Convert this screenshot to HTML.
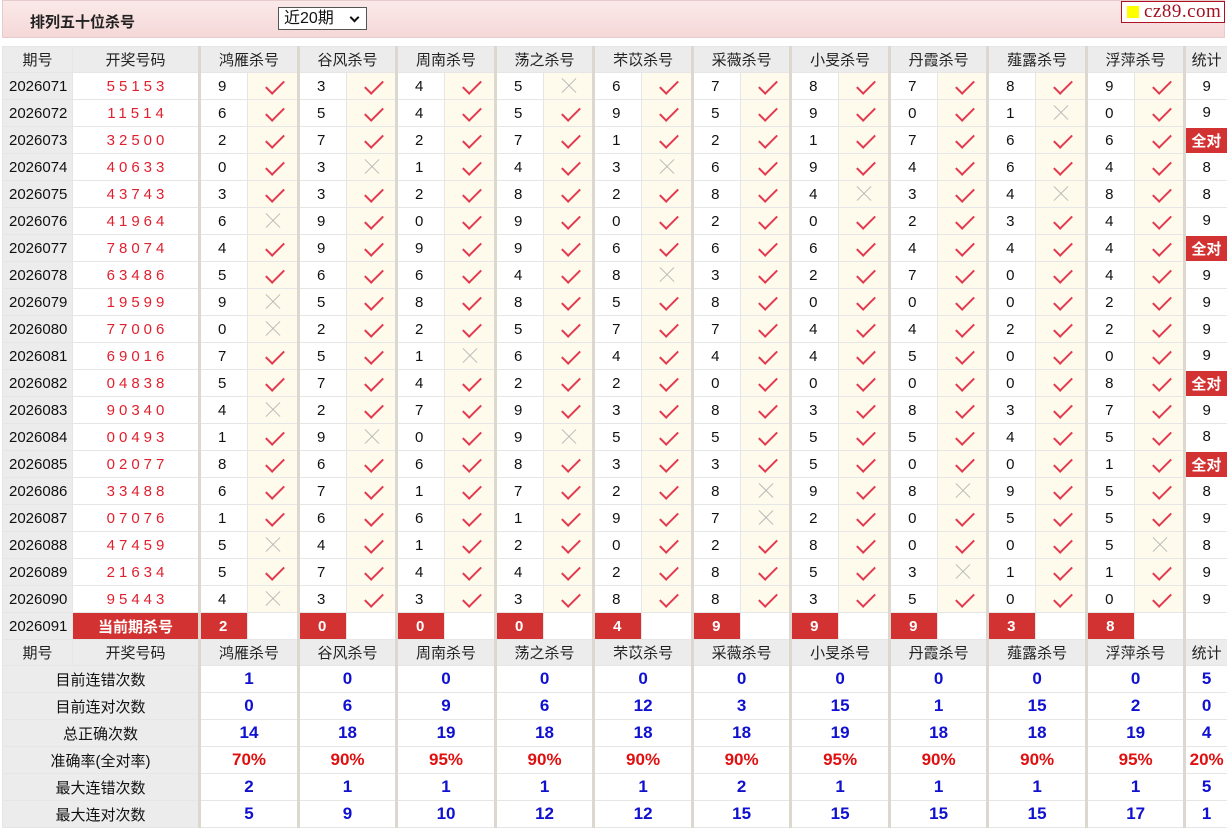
<!DOCTYPE html>
<html><head><meta charset="utf-8">
<style>
*{margin:0;padding:0;box-sizing:border-box}
body{width:1227px;height:828px;overflow:hidden;background:#fff;font-family:"Liberation Sans","Noto Sans CJK SC",sans-serif;font-size:15px;color:#111}
.top{position:absolute;left:2px;top:0;width:1223px;height:38px;background:linear-gradient(#fbe9e9,#f5d8d8);border:1px solid #e6cccc}
.title{position:absolute;left:27px;top:10px;font-size:15px;font-weight:bold;color:#222}
.sel{position:absolute;left:278px;top:7px;width:89px;height:23px;border:1px solid #555;background:#fff;font-size:16px;padding-left:5px;line-height:21px}
.sel i{position:absolute;right:8px;top:6px;width:7px;height:7px;border-right:2px solid #111;border-bottom:2px solid #111;transform:rotate(45deg)}
.logo{position:absolute;left:1121px;top:1px;width:104px;height:22px;border:1px solid #b01020;background:#fff;font-family:"Liberation Serif",serif;font-size:19px;color:#a01020;line-height:19px;padding-left:22px;letter-spacing:0.5px}
.logo b{position:absolute;left:5px;top:4px;width:12px;height:12px;background:#ff0}
table{position:absolute;left:2px;top:46px;border-collapse:collapse;table-layout:fixed;width:1225px}
td{height:27px;border:1px solid #e6e6e6;text-align:center;padding:0;white-space:nowrap;position:relative}
tr.h td{height:26px;background:#ececec;color:#222}
td.q{background:#ececec;text-align:left;padding-left:6px;font-size:15px}
tr.h td.q{text-align:center;padding:0}
td.m{color:#e0202f;letter-spacing:4px;padding-left:4px}
td.g{border-left:3px solid #dcd8d0;text-align:left;padding-left:17px}
tr.h td.g,td.g.s{text-align:center;padding-left:0}
td.y,td.n{background:#fffbec}
td.y::after{content:"";position:absolute;left:22px;top:3px;width:8px;height:16px;border-right:2px solid #e23a50;border-bottom:2px solid #e23a50;transform:rotate(45deg)}
td.n::before,td.n::after{content:"";position:absolute;left:15px;top:12px;width:20px;height:1px;background:#b8b8b8;transform:rotate(45deg)}
td.n::after{transform:rotate(-45deg)}
td.t{border-left:3px solid #dcd8d0}
td.a{background:#d33232;color:#fff;font-weight:bold;border:2px solid #fff;border-left:3px solid #dcd8d0}
td.r{background:#d33232;color:#fff;font-weight:bold;text-align:left;padding-left:18px}
td.cur{background:#d33232;color:#fff;font-weight:bold}
td.lb{background:#ececec;text-align:center}
td.v{color:#1010d0;font-weight:bold;font-size:17px;border-left:3px solid #dcd8d0;text-align:center}
td.p{color:#e01010}
</style></head><body>
<div class="top"><div class="title">排列五十位杀号</div></div>
<div class="sel">近20期<i></i></div>
<div class="logo"><b></b>cz89.com</div>
<table>
<colgroup><col style="width:70px"><col style="width:127px">
<col style="width:48px"><col style="width:51px"><col style="width:48px"><col style="width:50px"><col style="width:48px"><col style="width:51px"><col style="width:48px"><col style="width:50px"><col style="width:48px"><col style="width:51px"><col style="width:48px"><col style="width:50px"><col style="width:48px"><col style="width:51px"><col style="width:48px"><col style="width:50px"><col style="width:48px"><col style="width:51px"><col style="width:48px"><col style="width:50px"><col style="width:43px"></colgroup>
<tr class="h"><td class="q">期号</td><td>开奖号码</td><td class="g" colspan="2">鸿雁杀号</td><td class="g" colspan="2">谷风杀号</td><td class="g" colspan="2">周南杀号</td><td class="g" colspan="2">荡之杀号</td><td class="g" colspan="2">芣苡杀号</td><td class="g" colspan="2">采薇杀号</td><td class="g" colspan="2">小旻杀号</td><td class="g" colspan="2">丹霞杀号</td><td class="g" colspan="2">薤露杀号</td><td class="g" colspan="2">浮萍杀号</td><td class="t">统计</td></tr>
<tr><td class="q">2026071</td><td class="m">55153</td><td class="g">9</td><td class="y"></td><td class="g">3</td><td class="y"></td><td class="g">4</td><td class="y"></td><td class="g">5</td><td class="n"></td><td class="g">6</td><td class="y"></td><td class="g">7</td><td class="y"></td><td class="g">8</td><td class="y"></td><td class="g">7</td><td class="y"></td><td class="g">8</td><td class="y"></td><td class="g">9</td><td class="y"></td><td class="t">9</td></tr>
<tr><td class="q">2026072</td><td class="m">11514</td><td class="g">6</td><td class="y"></td><td class="g">5</td><td class="y"></td><td class="g">4</td><td class="y"></td><td class="g">5</td><td class="y"></td><td class="g">9</td><td class="y"></td><td class="g">5</td><td class="y"></td><td class="g">9</td><td class="y"></td><td class="g">0</td><td class="y"></td><td class="g">1</td><td class="n"></td><td class="g">0</td><td class="y"></td><td class="t">9</td></tr>
<tr><td class="q">2026073</td><td class="m">32500</td><td class="g">2</td><td class="y"></td><td class="g">7</td><td class="y"></td><td class="g">2</td><td class="y"></td><td class="g">7</td><td class="y"></td><td class="g">1</td><td class="y"></td><td class="g">2</td><td class="y"></td><td class="g">1</td><td class="y"></td><td class="g">7</td><td class="y"></td><td class="g">6</td><td class="y"></td><td class="g">6</td><td class="y"></td><td class="a">全对</td></tr>
<tr><td class="q">2026074</td><td class="m">40633</td><td class="g">0</td><td class="y"></td><td class="g">3</td><td class="n"></td><td class="g">1</td><td class="y"></td><td class="g">4</td><td class="y"></td><td class="g">3</td><td class="n"></td><td class="g">6</td><td class="y"></td><td class="g">9</td><td class="y"></td><td class="g">4</td><td class="y"></td><td class="g">6</td><td class="y"></td><td class="g">4</td><td class="y"></td><td class="t">8</td></tr>
<tr><td class="q">2026075</td><td class="m">43743</td><td class="g">3</td><td class="y"></td><td class="g">3</td><td class="y"></td><td class="g">2</td><td class="y"></td><td class="g">8</td><td class="y"></td><td class="g">2</td><td class="y"></td><td class="g">8</td><td class="y"></td><td class="g">4</td><td class="n"></td><td class="g">3</td><td class="y"></td><td class="g">4</td><td class="n"></td><td class="g">8</td><td class="y"></td><td class="t">8</td></tr>
<tr><td class="q">2026076</td><td class="m">41964</td><td class="g">6</td><td class="n"></td><td class="g">9</td><td class="y"></td><td class="g">0</td><td class="y"></td><td class="g">9</td><td class="y"></td><td class="g">0</td><td class="y"></td><td class="g">2</td><td class="y"></td><td class="g">0</td><td class="y"></td><td class="g">2</td><td class="y"></td><td class="g">3</td><td class="y"></td><td class="g">4</td><td class="y"></td><td class="t">9</td></tr>
<tr><td class="q">2026077</td><td class="m">78074</td><td class="g">4</td><td class="y"></td><td class="g">9</td><td class="y"></td><td class="g">9</td><td class="y"></td><td class="g">9</td><td class="y"></td><td class="g">6</td><td class="y"></td><td class="g">6</td><td class="y"></td><td class="g">6</td><td class="y"></td><td class="g">4</td><td class="y"></td><td class="g">4</td><td class="y"></td><td class="g">4</td><td class="y"></td><td class="a">全对</td></tr>
<tr><td class="q">2026078</td><td class="m">63486</td><td class="g">5</td><td class="y"></td><td class="g">6</td><td class="y"></td><td class="g">6</td><td class="y"></td><td class="g">4</td><td class="y"></td><td class="g">8</td><td class="n"></td><td class="g">3</td><td class="y"></td><td class="g">2</td><td class="y"></td><td class="g">7</td><td class="y"></td><td class="g">0</td><td class="y"></td><td class="g">4</td><td class="y"></td><td class="t">9</td></tr>
<tr><td class="q">2026079</td><td class="m">19599</td><td class="g">9</td><td class="n"></td><td class="g">5</td><td class="y"></td><td class="g">8</td><td class="y"></td><td class="g">8</td><td class="y"></td><td class="g">5</td><td class="y"></td><td class="g">8</td><td class="y"></td><td class="g">0</td><td class="y"></td><td class="g">0</td><td class="y"></td><td class="g">0</td><td class="y"></td><td class="g">2</td><td class="y"></td><td class="t">9</td></tr>
<tr><td class="q">2026080</td><td class="m">77006</td><td class="g">0</td><td class="n"></td><td class="g">2</td><td class="y"></td><td class="g">2</td><td class="y"></td><td class="g">5</td><td class="y"></td><td class="g">7</td><td class="y"></td><td class="g">7</td><td class="y"></td><td class="g">4</td><td class="y"></td><td class="g">4</td><td class="y"></td><td class="g">2</td><td class="y"></td><td class="g">2</td><td class="y"></td><td class="t">9</td></tr>
<tr><td class="q">2026081</td><td class="m">69016</td><td class="g">7</td><td class="y"></td><td class="g">5</td><td class="y"></td><td class="g">1</td><td class="n"></td><td class="g">6</td><td class="y"></td><td class="g">4</td><td class="y"></td><td class="g">4</td><td class="y"></td><td class="g">4</td><td class="y"></td><td class="g">5</td><td class="y"></td><td class="g">0</td><td class="y"></td><td class="g">0</td><td class="y"></td><td class="t">9</td></tr>
<tr><td class="q">2026082</td><td class="m">04838</td><td class="g">5</td><td class="y"></td><td class="g">7</td><td class="y"></td><td class="g">4</td><td class="y"></td><td class="g">2</td><td class="y"></td><td class="g">2</td><td class="y"></td><td class="g">0</td><td class="y"></td><td class="g">0</td><td class="y"></td><td class="g">0</td><td class="y"></td><td class="g">0</td><td class="y"></td><td class="g">8</td><td class="y"></td><td class="a">全对</td></tr>
<tr><td class="q">2026083</td><td class="m">90340</td><td class="g">4</td><td class="n"></td><td class="g">2</td><td class="y"></td><td class="g">7</td><td class="y"></td><td class="g">9</td><td class="y"></td><td class="g">3</td><td class="y"></td><td class="g">8</td><td class="y"></td><td class="g">3</td><td class="y"></td><td class="g">8</td><td class="y"></td><td class="g">3</td><td class="y"></td><td class="g">7</td><td class="y"></td><td class="t">9</td></tr>
<tr><td class="q">2026084</td><td class="m">00493</td><td class="g">1</td><td class="y"></td><td class="g">9</td><td class="n"></td><td class="g">0</td><td class="y"></td><td class="g">9</td><td class="n"></td><td class="g">5</td><td class="y"></td><td class="g">5</td><td class="y"></td><td class="g">5</td><td class="y"></td><td class="g">5</td><td class="y"></td><td class="g">4</td><td class="y"></td><td class="g">5</td><td class="y"></td><td class="t">8</td></tr>
<tr><td class="q">2026085</td><td class="m">02077</td><td class="g">8</td><td class="y"></td><td class="g">6</td><td class="y"></td><td class="g">6</td><td class="y"></td><td class="g">8</td><td class="y"></td><td class="g">3</td><td class="y"></td><td class="g">3</td><td class="y"></td><td class="g">5</td><td class="y"></td><td class="g">0</td><td class="y"></td><td class="g">0</td><td class="y"></td><td class="g">1</td><td class="y"></td><td class="a">全对</td></tr>
<tr><td class="q">2026086</td><td class="m">33488</td><td class="g">6</td><td class="y"></td><td class="g">7</td><td class="y"></td><td class="g">1</td><td class="y"></td><td class="g">7</td><td class="y"></td><td class="g">2</td><td class="y"></td><td class="g">8</td><td class="n"></td><td class="g">9</td><td class="y"></td><td class="g">8</td><td class="n"></td><td class="g">9</td><td class="y"></td><td class="g">5</td><td class="y"></td><td class="t">8</td></tr>
<tr><td class="q">2026087</td><td class="m">07076</td><td class="g">1</td><td class="y"></td><td class="g">6</td><td class="y"></td><td class="g">6</td><td class="y"></td><td class="g">1</td><td class="y"></td><td class="g">9</td><td class="y"></td><td class="g">7</td><td class="n"></td><td class="g">2</td><td class="y"></td><td class="g">0</td><td class="y"></td><td class="g">5</td><td class="y"></td><td class="g">5</td><td class="y"></td><td class="t">9</td></tr>
<tr><td class="q">2026088</td><td class="m">47459</td><td class="g">5</td><td class="n"></td><td class="g">4</td><td class="y"></td><td class="g">1</td><td class="y"></td><td class="g">2</td><td class="y"></td><td class="g">0</td><td class="y"></td><td class="g">2</td><td class="y"></td><td class="g">8</td><td class="y"></td><td class="g">0</td><td class="y"></td><td class="g">0</td><td class="y"></td><td class="g">5</td><td class="n"></td><td class="t">8</td></tr>
<tr><td class="q">2026089</td><td class="m">21634</td><td class="g">5</td><td class="y"></td><td class="g">7</td><td class="y"></td><td class="g">4</td><td class="y"></td><td class="g">4</td><td class="y"></td><td class="g">2</td><td class="y"></td><td class="g">8</td><td class="y"></td><td class="g">5</td><td class="y"></td><td class="g">3</td><td class="n"></td><td class="g">1</td><td class="y"></td><td class="g">1</td><td class="y"></td><td class="t">9</td></tr>
<tr><td class="q">2026090</td><td class="m">95443</td><td class="g">4</td><td class="n"></td><td class="g">3</td><td class="y"></td><td class="g">3</td><td class="y"></td><td class="g">3</td><td class="y"></td><td class="g">8</td><td class="y"></td><td class="g">8</td><td class="y"></td><td class="g">3</td><td class="y"></td><td class="g">5</td><td class="y"></td><td class="g">0</td><td class="y"></td><td class="g">0</td><td class="y"></td><td class="t">9</td></tr>
<tr><td class="q">2026091</td><td class="cur">当前期杀号</td><td class="g r">2</td><td></td><td class="g r">0</td><td></td><td class="g r">0</td><td></td><td class="g r">0</td><td></td><td class="g r">4</td><td></td><td class="g r">9</td><td></td><td class="g r">9</td><td></td><td class="g r">9</td><td></td><td class="g r">3</td><td></td><td class="g r">8</td><td></td><td class="t"></td></tr>
<tr class="h"><td class="q">期号</td><td>开奖号码</td><td class="g" colspan="2">鸿雁杀号</td><td class="g" colspan="2">谷风杀号</td><td class="g" colspan="2">周南杀号</td><td class="g" colspan="2">荡之杀号</td><td class="g" colspan="2">芣苡杀号</td><td class="g" colspan="2">采薇杀号</td><td class="g" colspan="2">小旻杀号</td><td class="g" colspan="2">丹霞杀号</td><td class="g" colspan="2">薤露杀号</td><td class="g" colspan="2">浮萍杀号</td><td class="t">统计</td></tr>
<tr><td class="lb" colspan="2">目前连错次数</td><td class="v" colspan="2">1</td><td class="v" colspan="2">0</td><td class="v" colspan="2">0</td><td class="v" colspan="2">0</td><td class="v" colspan="2">0</td><td class="v" colspan="2">0</td><td class="v" colspan="2">0</td><td class="v" colspan="2">0</td><td class="v" colspan="2">0</td><td class="v" colspan="2">0</td><td class="v">5</td></tr>
<tr><td class="lb" colspan="2">目前连对次数</td><td class="v" colspan="2">0</td><td class="v" colspan="2">6</td><td class="v" colspan="2">9</td><td class="v" colspan="2">6</td><td class="v" colspan="2">12</td><td class="v" colspan="2">3</td><td class="v" colspan="2">15</td><td class="v" colspan="2">1</td><td class="v" colspan="2">15</td><td class="v" colspan="2">2</td><td class="v">0</td></tr>
<tr><td class="lb" colspan="2">总正确次数</td><td class="v" colspan="2">14</td><td class="v" colspan="2">18</td><td class="v" colspan="2">19</td><td class="v" colspan="2">18</td><td class="v" colspan="2">18</td><td class="v" colspan="2">18</td><td class="v" colspan="2">19</td><td class="v" colspan="2">18</td><td class="v" colspan="2">18</td><td class="v" colspan="2">19</td><td class="v">4</td></tr>
<tr><td class="lb" colspan="2">准确率(全对率)</td><td class="v p" colspan="2">70%</td><td class="v p" colspan="2">90%</td><td class="v p" colspan="2">95%</td><td class="v p" colspan="2">90%</td><td class="v p" colspan="2">90%</td><td class="v p" colspan="2">90%</td><td class="v p" colspan="2">95%</td><td class="v p" colspan="2">90%</td><td class="v p" colspan="2">90%</td><td class="v p" colspan="2">95%</td><td class="v p">20%</td></tr>
<tr><td class="lb" colspan="2">最大连错次数</td><td class="v" colspan="2">2</td><td class="v" colspan="2">1</td><td class="v" colspan="2">1</td><td class="v" colspan="2">1</td><td class="v" colspan="2">1</td><td class="v" colspan="2">2</td><td class="v" colspan="2">1</td><td class="v" colspan="2">1</td><td class="v" colspan="2">1</td><td class="v" colspan="2">1</td><td class="v">5</td></tr>
<tr><td class="lb" colspan="2">最大连对次数</td><td class="v" colspan="2">5</td><td class="v" colspan="2">9</td><td class="v" colspan="2">10</td><td class="v" colspan="2">12</td><td class="v" colspan="2">12</td><td class="v" colspan="2">15</td><td class="v" colspan="2">15</td><td class="v" colspan="2">15</td><td class="v" colspan="2">15</td><td class="v" colspan="2">17</td><td class="v">1</td></tr>
</table>
</body></html>
